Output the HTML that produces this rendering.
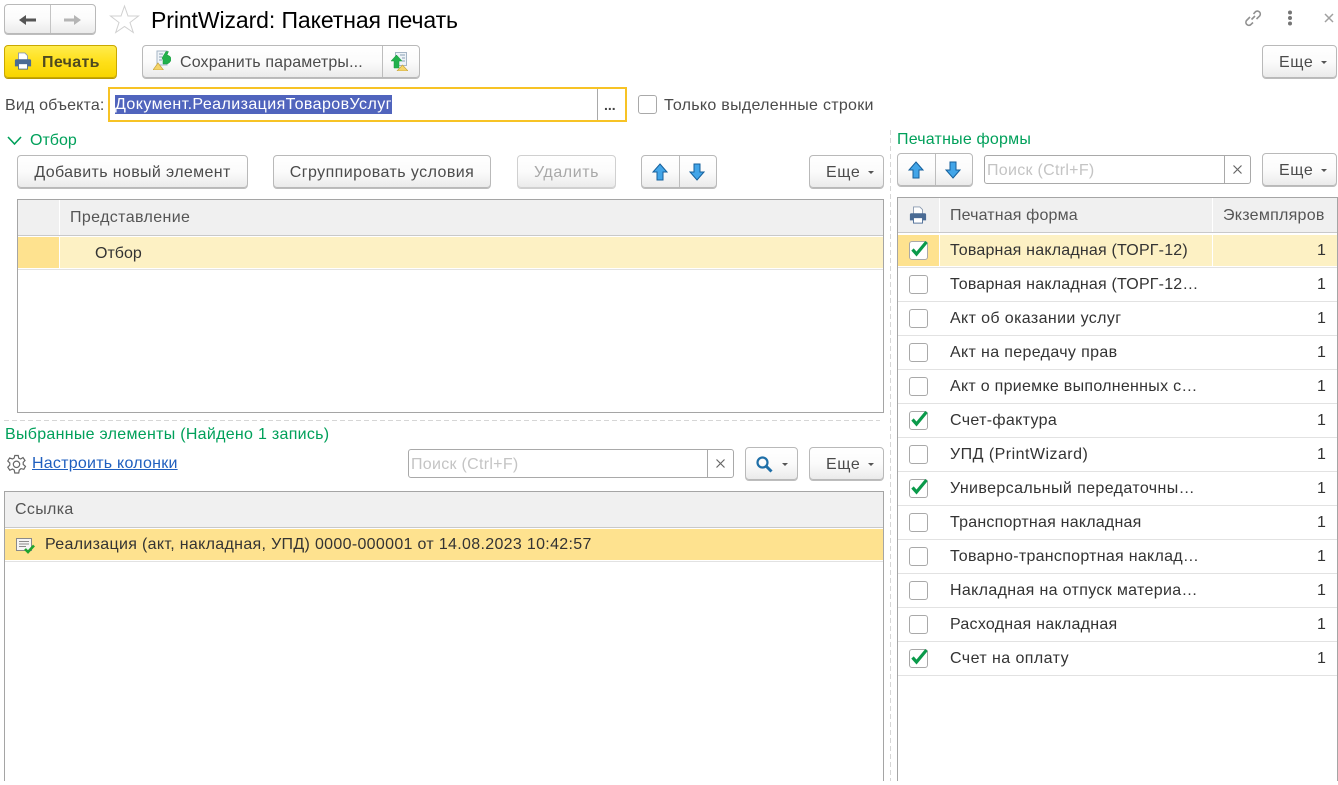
<!DOCTYPE html>
<html lang="ru"><head><meta charset="utf-8"><title>PrintWizard</title>
<style>
html,body{margin:0;padding:0;background:#fff;width:1338px;height:785px;overflow:hidden}
body{font-family:"Liberation Sans",Arial,sans-serif;font-size:16px;color:#4b4b4b;position:relative}
.a,.b,.t,.f,.ln,.c,svg{position:absolute}
.t{white-space:nowrap;line-height:20px;height:20px}
.b{box-sizing:border-box;border:1px solid #b9b9b9;border-radius:4px;box-shadow:0 1px 0 #bdbdbd;background:linear-gradient(#fff,#fbfbfb 50%,#ebebeb);line-height:33px;text-align:center;white-space:nowrap;height:33px}
.f{box-sizing:border-box;border:1px solid #a9a9a9;border-radius:3px;background:#fff}
.g{color:#00a05a}
.ln{background:#a5a5a5}
.e{position:absolute;right:9px;top:15px;width:0;height:0;border:3.5px solid transparent;border-top:3.5px solid #555;border-bottom:0}
.mo{letter-spacing:.6px}
.hd{background:#f0f0f0}
.row{color:#333}
.c{box-sizing:border-box;width:19px;height:19px;border:1px solid #a9a9a9;border-radius:3px;background:#fff}
.dv{position:absolute;width:1px;background:repeating-linear-gradient(#d6d6d6 0 5px,transparent 5px 8px)}
.dh{position:absolute;height:1px;background:repeating-linear-gradient(90deg,#d6d6d6 0 5px,transparent 5px 8px)}
</style></head><body>

<!-- title bar -->
<div class="b" style="left:4px;top:4px;width:92px;height:30px"></div>
<div class="ln" style="left:50px;top:5px;width:1px;height:28px;background:#c4c4c4"></div>
<svg style="left:19px;top:15px" width="17" height="10" viewBox="0 0 17 10"><path d="M0 5 7 0V3.500H17V6.500H7V10Z" fill="#555"/></svg>
<svg style="left:64px;top:15px" width="17" height="10" viewBox="0 0 17 10"><path d="M17 5 10 0V3.500H0V6.500H10V10Z" fill="#b5b5b5"/></svg>
<svg style="left:109px;top:4px" width="31" height="30" viewBox="0 0 31 30"><path d="M15.500 2 19 12H29.500L21 18.500 24.300 28.500 15.500 22.500 6.700 28.500 10 18.500 1.500 12H12Z" fill="#fff" stroke="#d0d0d0" stroke-width="1"/></svg>
<div class="t" style="left:151px;top:5px;font-size:23px;letter-spacing:-.09px;line-height:30px;height:30px;color:#000">PrintWizard: Пакетная печать</div>
<svg style="left:1243px;top:8px" width="20" height="20" viewBox="0 0 20 20" fill="none" stroke="#909090" stroke-width="1.600"><path d="M8.500 11.500 12 8M7 9 3.500 12.500a3 3 0 0 0 4.200 4.200L10 14.500M10.500 6 12.500 3.700a3 3 0 0 1 4.200 4.200L13.500 11"/></svg>
<svg style="left:1287px;top:10px" width="6" height="16" viewBox="0 0 6 16" fill="#757575"><circle cx="3" cy="2.500" r="2"/><circle cx="3" cy="8" r="2"/><circle cx="3" cy="13.500" r="2"/></svg>
<svg style="left:1323px;top:12px" width="12" height="12" viewBox="0 0 12 12" stroke="#a0a0a0" stroke-width="1.500"><path d="M2 2 10 10M10 2 2 10"/></svg>

<!-- command bar -->
<div class="b" style="left:4px;top:45px;width:113px;border:1px solid #c9a800;box-shadow:0 1px 0 #b89a00;background:linear-gradient(#ffec4d,#ffe01a 50%,#f8d500);font-weight:bold;color:#4e4a20;text-align:left;padding-left:37px;letter-spacing:.33px">Печать</div>
<svg style="left:14px;top:52px" width="18" height="18" viewBox="0 0 20 20"><path d="M5 1H12L15 4V9H5Z" fill="#fff" stroke="#8a9ab0"/><path d="M2.500 8H17.500Q19 8 19 9.500V16H1V9.500Q1 8 2.500 8Z" fill="#4a6b94"/><rect x="5" y="13" width="10" height="6" fill="#fff" stroke="#4a6b94"/></svg>
<div class="b" style="left:142px;top:45px;width:278px;text-align:left;padding-left:37px;letter-spacing:.14px">Сохранить параметры...</div>
<div class="ln" style="left:382px;top:46px;width:1px;height:31px;background:#bdbdbd"></div>
<svg style="left:153px;top:50px" width="18" height="20" viewBox="0 0 18 20"><rect x="4" y="1" width="10" height="14" fill="#eef3f8" stroke="#a5b5c5"/><path d="M6 4H10M6 7H9M6 10H9" stroke="#8aa0b5"/><path d="M9 8 13 1.500H15.500L14 5Q18 6 18 9 18 12.500 14 14H10V10Z" fill="#22b14c" stroke="#159a3b" stroke-width=".5"/><path d="M0 20 5 13 10.500 20Z" fill="#f5d469" stroke="#c7a53c" stroke-width=".7"/></svg>
<svg style="left:391px;top:52px" width="17" height="19" viewBox="0 0 17 19"><rect x="4.500" y=".5" width="11" height="13" fill="#eef3f8" stroke="#a5b5c5"/><path d="M9 3H14M11 6H14M11 9H14" stroke="#8aa0b5"/><path d="M0 9 5.500 3 11 9H8V16H3V9Z" fill="#22b14c" stroke="#159a3b" stroke-width=".5"/><path d="M6 19 11.500 13 17 19Z" fill="#f5d469" stroke="#c7a53c" stroke-width=".7"/></svg>
<div class="b mo" style="left:1262px;top:45px;width:75px;text-align:left;padding-left:16px">Еще<i class="e"></i></div>

<!-- object kind -->
<div class="t" style="left:5px;top:96px;letter-spacing:.17px">Вид объекта:</div>
<div class="a" style="left:108px;top:87px;width:519px;height:35px;box-sizing:border-box;border:2px solid #f7c325;background:#fff"></div>
<div class="t" style="left:115px;top:95px;width:277px;height:19px;line-height:20px;background:#5064bd;color:#fff;letter-spacing:.42px;overflow:hidden">Документ.РеализацияТоваровУслуг</div>
<div class="ln" style="left:597px;top:89px;width:1px;height:31px;background:#a9a9a9"></div>
<div class="t" style="left:604px;top:95px;font-weight:bold;font-size:14px;color:#444">...</div>
<div class="c" style="left:638px;top:95px;border-radius:3px"></div>
<div class="t" style="left:664px;top:96px;letter-spacing:.29px">Только выделенные строки</div>

<!-- filter -->
<svg style="left:6px;top:135px" width="17" height="11" viewBox="0 0 17 11" fill="none" stroke="#00a05a" stroke-width="1.600"><path d="M2 2 8.500 9 15 2"/></svg>
<div class="t g" style="left:30px;top:131px">Отбор</div>
<div class="b" style="left:17px;top:155px;width:231px;letter-spacing:.36px">Добавить новый элемент</div>
<div class="b" style="left:273px;top:155px;width:218px;letter-spacing:.43px">Сгруппировать условия</div>
<div class="b" style="left:517px;top:155px;width:99px;color:#a8a8a8;border-color:#d0d0d0;box-shadow:0 1px 0 #d0d0d0;letter-spacing:.57px">Удалить</div>
<div class="b" style="left:641px;top:155px;width:76px"></div>
<div class="ln" style="left:679px;top:156px;width:1px;height:31px;background:#bdbdbd"></div>
<svg style="left:652px;top:163px" width="16" height="18" viewBox="0 0 16 18"><path d="M8 1 15 9H11V17H5V9H1Z" fill="#42a5e8" stroke="#15609c"/></svg>
<svg style="left:689px;top:163px" width="16" height="18" viewBox="0 0 16 18"><path d="M8 17 15 9H11V1H5V9H1Z" fill="#42a5e8" stroke="#15609c"/></svg>
<div class="b mo" style="left:809px;top:155px;width:75px;text-align:left;padding-left:16px">Еще<i class="e"></i></div>

<!-- filter table -->
<div class="a" style="left:17px;top:199px;width:867px;height:214px;box-sizing:border-box;border:1px solid #a5a5a5;background:#fff"></div>
<div class="a hd" style="left:18px;top:200px;width:865px;height:35px"></div>
<div class="a" style="left:18px;top:235px;width:865px;height:1px;background:#c9c9c9"></div>
<div class="a" style="left:59px;top:200px;width:1px;height:35px;background:#fff"></div>
<div class="t" style="left:70px;top:208px;color:#555;letter-spacing:.38px">Представление</div>
<div class="a" style="left:18px;top:237px;width:41px;height:31px;background:#fee28f"></div>
<div class="a" style="left:60px;top:237px;width:823px;height:31px;background:#fdf1c4"></div>
<div class="a" style="left:18px;top:269px;width:865px;height:1px;background:#e2e2e2"></div>
<div class="t row" style="left:95px;top:244px">Отбор</div>

<!-- splitters -->
<div class="dh" style="left:4px;top:420px;width:876px"></div>
<div class="dv" style="left:890px;top:130px;height:651px"></div>

<!-- selected elements -->
<div class="t g" style="left:5px;top:425px;letter-spacing:.29px">Выбранные элементы (Найдено 1 запись)</div>
<svg style="left:6px;top:454px" width="21" height="21" viewBox="0 0 21 21" fill="none" stroke="#666" stroke-width="1.200"><path d="M8.800 1.500H12.200L12.800 4.200 14.600 5 17 3.600 19 6.400 17.200 8.400V10.500L19.500 12.400 17.800 15.300 15 14.600 13.300 16 12.700 19H8.800L8.200 16 6.500 15 3.800 16.200 1.800 13.200 3.800 11V9L1.800 7 3.600 4 6.500 5 8.200 4Z"/><circle cx="10.500" cy="10.300" r="3.200"/></svg>
<div class="t" style="left:32px;top:454px;color:#1f5fbf;text-decoration:underline;letter-spacing:.24px">Настроить колонки</div>
<div class="f" style="left:408px;top:449px;width:326px;height:29px"></div>
<div class="ln" style="left:707px;top:450px;width:1px;height:27px;background:#a9a9a9"></div>
<div class="t" style="left:411px;top:455px;color:#c4c4c4;letter-spacing:.29px">Поиск (Ctrl+F)</div>
<svg style="left:715px;top:458px" width="11" height="11" viewBox="0 0 11 11" stroke="#666" stroke-width="1.200"><path d="M1.500 1.500 9.500 9.500M9.500 1.500 1.500 9.500"/></svg>
<div class="b" style="left:745px;top:447px;width:53px"><i class="e"></i></div>
<svg style="left:755px;top:455px" width="20" height="19" viewBox="0 0 20 19" fill="none" stroke="#1f6fa8"><circle cx="7.500" cy="7.500" r="5" stroke-width="2.200"/><path d="M11 11 16.500 16.500" stroke-width="3"/></svg>
<div class="b mo" style="left:809px;top:447px;width:75px;text-align:left;padding-left:16px">Еще<i class="e"></i></div>

<!-- selected table -->
<div class="a" style="left:4px;top:491px;width:880px;height:290px;box-sizing:border-box;border:1px solid #a5a5a5;border-bottom:0;background:#fff"></div>
<div class="a hd" style="left:5px;top:492px;width:878px;height:35px"></div>
<div class="a" style="left:5px;top:527px;width:878px;height:1px;background:#c9c9c9"></div>
<div class="t" style="left:15px;top:500px;color:#555;letter-spacing:.33px">Ссылка</div>
<div class="a" style="left:5px;top:529px;width:878px;height:31px;background:#fee28f"></div>
<div class="a" style="left:5px;top:561px;width:878px;height:1px;background:#e2e2e2"></div>
<svg style="left:16px;top:537px" width="20" height="18" viewBox="0 0 20 18"><rect x=".5" y="1.500" width="15" height="12" fill="#f5f5f5" stroke="#8a8a8a"/><path d="M3 4.500H13M3 7H13M3 9.500H10" stroke="#8a8a8a"/><path d="M9 12 12 15 18 8.500" fill="none" stroke="#1fa32f" stroke-width="2.600"/></svg>
<div class="t row" style="left:45px;top:535px;letter-spacing:.32px">Реализация (акт, накладная, УПД) 0000-000001 от 14.08.2023 10:42:57</div>

<!-- right panel -->
<div class="t g" style="left:897px;top:130px;letter-spacing:.2px">Печатные формы</div>
<div class="b" style="left:897px;top:153px;width:76px"></div>
<div class="ln" style="left:935px;top:154px;width:1px;height:31px;background:#bdbdbd"></div>
<svg style="left:908px;top:161px" width="16" height="18" viewBox="0 0 16 18"><path d="M8 1 15 9H11V17H5V9H1Z" fill="#42a5e8" stroke="#15609c"/></svg>
<svg style="left:945px;top:161px" width="16" height="18" viewBox="0 0 16 18"><path d="M8 17 15 9H11V1H5V9H1Z" fill="#42a5e8" stroke="#15609c"/></svg>
<div class="f" style="left:984px;top:155px;width:267px;height:29px"></div>
<div class="ln" style="left:1224px;top:156px;width:1px;height:27px;background:#a9a9a9"></div>
<div class="t" style="left:987px;top:161px;color:#c4c4c4;letter-spacing:.29px">Поиск (Ctrl+F)</div>
<svg style="left:1232px;top:164px" width="11" height="11" viewBox="0 0 11 11" stroke="#666" stroke-width="1.200"><path d="M1.500 1.500 9.500 9.500M9.500 1.500 1.500 9.500"/></svg>
<div class="b mo" style="left:1262px;top:153px;width:75px;text-align:left;padding-left:16px">Еще<i class="e"></i></div>

<div class="a" style="left:897px;top:197px;width:441px;height:584px;box-sizing:border-box;border:1px solid #a5a5a5;border-bottom:0;background:#fff"></div>
<div class="a hd" style="left:898px;top:198px;width:439px;height:34px"></div>
<div class="a" style="left:898px;top:232px;width:439px;height:1px;background:#c9c9c9"></div>
<div class="a" style="left:939px;top:198px;width:1px;height:34px;background:#fff"></div>
<div class="a" style="left:1212px;top:198px;width:1px;height:34px;background:#fff"></div>
<svg style="left:909px;top:206px" width="18" height="18" viewBox="0 0 20 20"><path d="M5 1H12L15 4V9H5Z" fill="#fff" stroke="#8a9ab0"/><path d="M2.500 8H17.500Q19 8 19 9.500V16H1V9.500Q1 8 2.500 8Z" fill="#4a6b94"/><rect x="5" y="13" width="10" height="6" fill="#fff" stroke="#4a6b94"/></svg>
<div class="t" style="left:950px;top:206px;color:#555;letter-spacing:.14px">Печатная форма</div>
<div class="t" style="left:1223px;top:206px;color:#555;letter-spacing:.27px">Экземпляров</div>

<div class="a" style="left:898px;top:235px;width:41px;height:31px;background:#fee28f"></div>
<div class="a" style="left:940px;top:235px;width:272px;height:31px;background:#fdf1c4"></div>
<div class="a" style="left:1213px;top:235px;width:124px;height:31px;background:#fdf1c4"></div>

<div class="a" style="left:898px;top:267px;width:439px;height:1px;background:#e2e2e2"></div>
<div class="a" style="left:898px;top:301px;width:439px;height:1px;background:#e2e2e2"></div>
<div class="a" style="left:898px;top:335px;width:439px;height:1px;background:#e2e2e2"></div>
<div class="a" style="left:898px;top:369px;width:439px;height:1px;background:#e2e2e2"></div>
<div class="a" style="left:898px;top:403px;width:439px;height:1px;background:#e2e2e2"></div>
<div class="a" style="left:898px;top:437px;width:439px;height:1px;background:#e2e2e2"></div>
<div class="a" style="left:898px;top:471px;width:439px;height:1px;background:#e2e2e2"></div>
<div class="a" style="left:898px;top:505px;width:439px;height:1px;background:#e2e2e2"></div>
<div class="a" style="left:898px;top:539px;width:439px;height:1px;background:#e2e2e2"></div>
<div class="a" style="left:898px;top:573px;width:439px;height:1px;background:#e2e2e2"></div>
<div class="a" style="left:898px;top:607px;width:439px;height:1px;background:#e2e2e2"></div>
<div class="a" style="left:898px;top:641px;width:439px;height:1px;background:#e2e2e2"></div>
<div class="a" style="left:898px;top:675px;width:439px;height:1px;background:#e2e2e2"></div>

<div class="c" style="left:909px;top:241px"></div>
<svg style="left:909px;top:238px" width="20" height="20" viewBox="0 0 20 20"><path d="M3.500 11.500 7.500 16 17.500 4" fill="none" stroke="#0a9a4a" stroke-width="3.200"/></svg>
<div class="c" style="left:909px;top:275px"></div>
<div class="c" style="left:909px;top:309px"></div>
<div class="c" style="left:909px;top:343px"></div>
<div class="c" style="left:909px;top:377px"></div>
<div class="c" style="left:909px;top:411px"></div>
<svg style="left:909px;top:408px" width="20" height="20" viewBox="0 0 20 20"><path d="M3.500 11.500 7.500 16 17.500 4" fill="none" stroke="#0a9a4a" stroke-width="3.200"/></svg>
<div class="c" style="left:909px;top:445px"></div>
<div class="c" style="left:909px;top:479px"></div>
<svg style="left:909px;top:476px" width="20" height="20" viewBox="0 0 20 20"><path d="M3.500 11.500 7.500 16 17.500 4" fill="none" stroke="#0a9a4a" stroke-width="3.200"/></svg>
<div class="c" style="left:909px;top:513px"></div>
<div class="c" style="left:909px;top:547px"></div>
<div class="c" style="left:909px;top:581px"></div>
<div class="c" style="left:909px;top:615px"></div>
<div class="c" style="left:909px;top:649px"></div>
<svg style="left:909px;top:646px" width="20" height="20" viewBox="0 0 20 20"><path d="M3.500 11.500 7.500 16 17.500 4" fill="none" stroke="#0a9a4a" stroke-width="3.200"/></svg>

<div class="t row" style="left:950px;top:241px;letter-spacing:.2px">Товарная накладная (ТОРГ-12)</div>
<div class="t row" style="left:950px;top:275px;letter-spacing:.2px">Товарная накладная (ТОРГ-12…</div>
<div class="t row" style="left:950px;top:309px;letter-spacing:.38px">Акт об оказании услуг</div>
<div class="t row" style="left:950px;top:343px;letter-spacing:.35px">Акт на передачу прав</div>
<div class="t row" style="left:950px;top:377px;letter-spacing:.28px">Акт о приемке выполненных с…</div>
<div class="t row" style="left:950px;top:411px;letter-spacing:.33px">Счет-фактура</div>
<div class="t row" style="left:950px;top:445px;letter-spacing:.47px">УПД (PrintWizard)</div>
<div class="t row" style="left:950px;top:479px;letter-spacing:.39px">Универсальный передаточны…</div>
<div class="t row" style="left:950px;top:513px;letter-spacing:.22px">Транспортная накладная</div>
<div class="t row" style="left:950px;top:547px;letter-spacing:.28px">Товарно-транспортная наклад…</div>
<div class="t row" style="left:950px;top:581px;letter-spacing:.34px">Накладная на отпуск материа…</div>
<div class="t row" style="left:950px;top:615px;letter-spacing:.26px">Расходная накладная</div>
<div class="t row" style="left:950px;top:649px;letter-spacing:.43px">Счет на оплату</div>

<div class="t row" style="left:1317px;top:241px">1</div>
<div class="t row" style="left:1317px;top:275px">1</div>
<div class="t row" style="left:1317px;top:309px">1</div>
<div class="t row" style="left:1317px;top:343px">1</div>
<div class="t row" style="left:1317px;top:377px">1</div>
<div class="t row" style="left:1317px;top:411px">1</div>
<div class="t row" style="left:1317px;top:445px">1</div>
<div class="t row" style="left:1317px;top:479px">1</div>
<div class="t row" style="left:1317px;top:513px">1</div>
<div class="t row" style="left:1317px;top:547px">1</div>
<div class="t row" style="left:1317px;top:581px">1</div>
<div class="t row" style="left:1317px;top:615px">1</div>
<div class="t row" style="left:1317px;top:649px">1</div>

</body></html>
